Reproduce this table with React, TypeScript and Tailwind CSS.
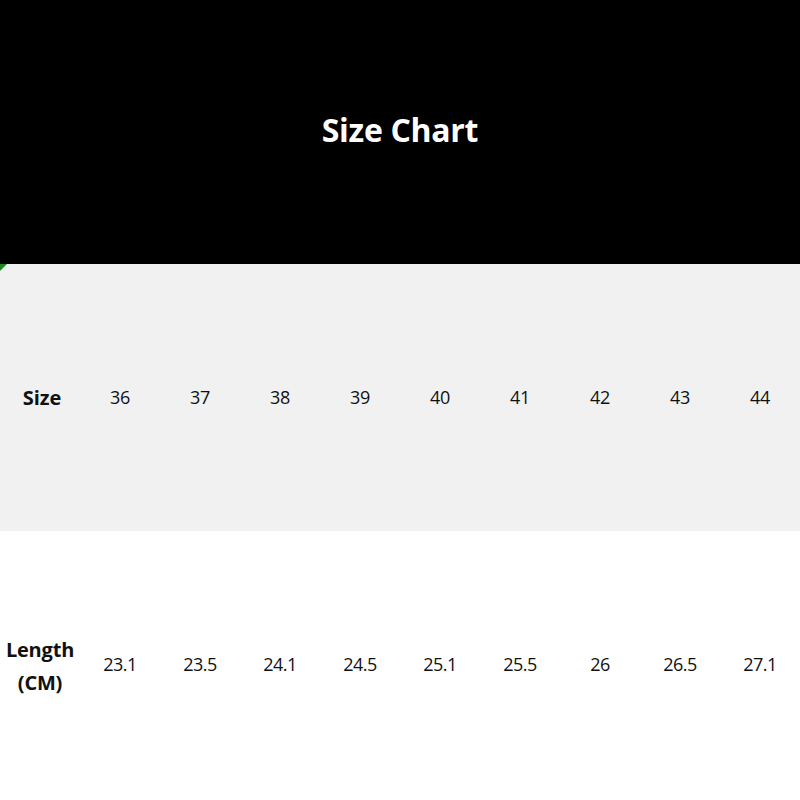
import React from "react";

const sizes = ["36", "37", "38", "39", "40", "41", "42", "43", "44"];
const lengths = ["23.1", "23.5", "24.1", "24.5", "25.1", "25.5", "26", "26.5", "27.1"];

export default function App() {
  return (
    <div className="w-[800px] h-[800px] flex flex-col bg-white text-[#111]" style={{ fontFamily: '"Open Sans", "Noto Sans", sans-serif' }}>
      <div className="h-[264px] bg-black flex items-center justify-center pb-[4px]">
        <h1 className="text-white font-bold text-[32px] tracking-[-0.3px]">Size Chart</h1>
      </div>
      <div className="relative h-[267px] bg-[#f1f1f1] grid grid-cols-10 items-center">
        <svg className="absolute left-0 top-0" width="7" height="7" viewBox="0 0 7 7">
          <polygon points="0,0 7,0 0,7" fill="#1a8a1a" />
        </svg>
        <div className="text-center font-bold text-[20px] pl-[4px]">Size</div>
        {sizes.map((s) => (
          <div key={s} className="text-center text-[18px] tracking-[-0.3px]">{s}</div>
        ))}
      </div>
      <div className="h-[269px] bg-white grid grid-cols-10 items-center">
        <div className="text-center font-bold text-[20px] leading-[33px] tracking-[-0.2px]">Length<br />(CM)</div>
        {lengths.map((s, i) => (
          <div key={i} className="text-center text-[18px] tracking-[-0.5px] -mt-[2px]">{s}</div>
        ))}
      </div>
    </div>
  );
}
